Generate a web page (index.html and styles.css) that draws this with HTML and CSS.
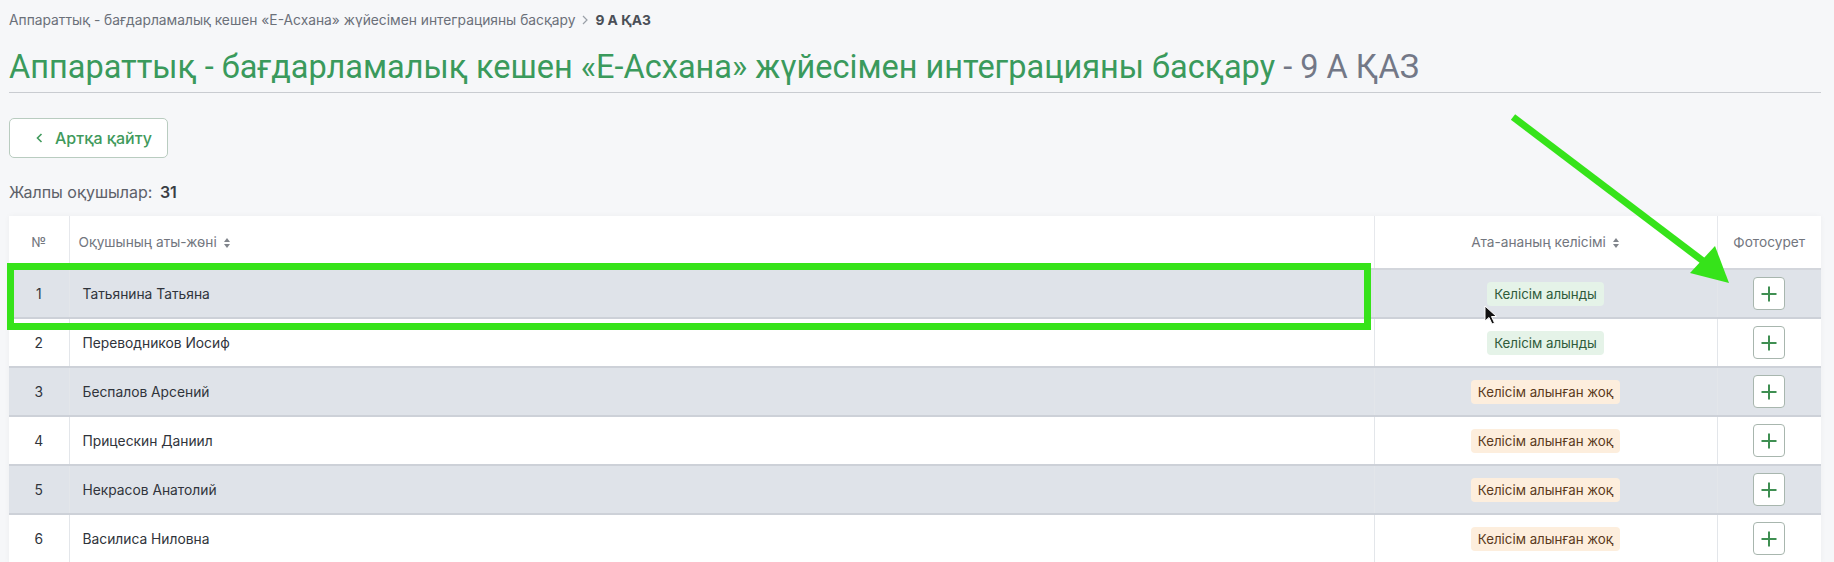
FILE: index.html
```html
<!DOCTYPE html>
<html lang="kk">

<head>
  <meta charset="UTF-8">
  <meta name="viewport" content="width=device-width, initial-scale=1.0">
  <title>9 А ҚАЗ - Е-Асхана</title>
  <link rel="stylesheet" href="styles.css">
</head>

<body>
  <div class="page">
    <!-- Breadcrumbs -->
    <nav class="crumbs">
      <a href="#">Аппараттық - бағдарламалық кешен «Е-Асхана» жүйесімен интеграцияны басқару</a>
      <svg class="crumbs-sep" width="8" height="10" viewBox="0 0 8 10"><path d="M2 1l4 4-4 4" fill="none" stroke="#9aa0a8" stroke-width="1.2"/></svg>
      <span class="crumbs-current">9 А ҚАЗ</span>
    </nav>

    <h1 class="title">
      <span class="title-main">Аппараттық - бағдарламалық кешен «Е-Асхана» жүйесімен интеграцияны басқару</span>
      <span class="title-class">- 9 А ҚАЗ</span>
    </h1>

    <button class="back-btn">
      <svg width="10" height="12" viewBox="0 0 10 12"><path d="M6.5 2L2.5 6l4 4" fill="none" stroke="#3f9a5c" stroke-width="1.6"/></svg>
      Артқа қайту
    </button>

    <div class="total">Жалпы оқушылар: <b>31</b></div>

    <!-- Students table -->
    <table class="students">
      <colgroup>
        <col class="col-num">
        <col>
        <col class="col-consent">
        <col class="col-photo">
      </colgroup>
      <thead>
        <tr>
          <th class="num">№</th>
          <th class="name">Оқушының аты-жөні <span class="sort"></span></th>
          <th class="center">Ата-ананың келісімі <span class="sort"></span></th>
          <th class="center">Фотосурет</th>
        </tr>
      </thead>
      <tbody>
        <tr class="grey">
          <td class="num">1</td>
          <td class="name">Татьянина Татьяна</td>
          <td class="center"><span class="badge ok">Келісім алынды</span></td>
          <td class="center"><button class="add-btn"></button></td>
        </tr>
        <tr>
          <td class="num">2</td>
          <td class="name">Переводников Иосиф</td>
          <td class="center"><span class="badge ok">Келісім алынды</span></td>
          <td class="center"><button class="add-btn"></button></td>
        </tr>
        <tr class="grey">
          <td class="num">3</td>
          <td class="name">Беспалов Арсений</td>
          <td class="center"><span class="badge no">Келісім алынған жоқ</span></td>
          <td class="center"><button class="add-btn"></button></td>
        </tr>
        <tr>
          <td class="num">4</td>
          <td class="name">Прицескин Даниил</td>
          <td class="center"><span class="badge no">Келісім алынған жоқ</span></td>
          <td class="center"><button class="add-btn"></button></td>
        </tr>
        <tr class="grey">
          <td class="num">5</td>
          <td class="name">Некрасов Анатолий</td>
          <td class="center"><span class="badge no">Келісім алынған жоқ</span></td>
          <td class="center"><button class="add-btn"></button></td>
        </tr>
        <tr>
          <td class="num">6</td>
          <td class="name">Василиса Ниловна</td>
          <td class="center"><span class="badge no">Келісім алынған жоқ</span></td>
          <td class="center"><button class="add-btn"></button></td>
        </tr>
      </tbody>
    </table>
  </div>

  <!-- Annotation marks drawn over the page -->
  <svg class="annotations" width="1834" height="562" viewBox="0 0 1834 562">
    <rect x="10.5" y="266.5" width="1357" height="60" fill="none" stroke="#36e31a" stroke-width="7"/>
    <line x1="1513" y1="117" x2="1703" y2="261" stroke="#36e31a" stroke-width="7"/>
    <polygon points="1729,283 1690,273 1715,246" fill="#36e31a"/>
    <path d="M1485 306 L1485 321 L1489 317.5 L1492 324 L1494.5 323 L1491.5 316.5 L1496.5 316.5 Z" fill="#111" stroke="#fff" stroke-width="1"/>
  </svg>
</body>

</html>
```

FILE: styles.css
```css
* {
  margin: 0;
  padding: 0;
  box-sizing: border-box;
}

body {
  background-color: #f6f7f9;
  font-family: Inter, "Noto Sans", sans-serif;
  color: #2b2f36;
  width: 1834px;
  height: 562px;
  overflow: hidden;
  position: relative;
}

.page {
  padding: 12px 13px 0 9px;
}

/* Breadcrumbs */
.crumbs {
  display: flex;
  align-items: center;
  gap: 6px;
  font-size: 13.8px;
  line-height: 16px;
  color: #6b7079;
}

.crumbs a {
  color: #6b7079;
  text-decoration: none;
}

.crumbs-current {
  font-weight: 700;
  color: #4a4f57;
}

/* Page title */
.title {
  margin-top: 20px;
  padding-bottom: 5px;
  border-bottom: 1.5px solid #c9ccd1;
  font-family: Roboto, "Liberation Sans", sans-serif;
  font-weight: 400;
  font-size: 32.5px;
  line-height: 39px;
  white-space: nowrap;
}

.title-main {
  color: #3a9a5c;
}

.title-class {
  color: #737887;
}

/* Back button */
.back-btn {
  margin-top: 25px;
  display: flex;
  align-items: center;
  gap: 10px;
  width: 159px;
  height: 40px;
  padding-left: 25px;
  background-color: #fff;
  border: 1px solid #b9ccc0;
  border-radius: 5px;
  font-family: Inter, sans-serif;
  font-size: 16px;
  font-weight: 500;
  color: #3f9a5c;
  cursor: pointer;
}

.total {
  margin-top: 24px;
  font-size: 16px;
  line-height: 20px;
  color: #5d6169;
}

.total b {
  font-weight: 600;
  color: #3a3e45;
  margin-left: 3px;
}

/* Table */
.students {
  margin-top: 14px;
  width: 1812px;
  table-layout: fixed;
  border-collapse: collapse;
  background-color: #fff;
  box-shadow: 0 0 6px rgba(0, 0, 0, 0.04);
  font-size: 13.8px;
}

.col-num {
  width: 60px;
}

.col-consent {
  width: 343px;
}

.col-photo {
  width: 104px;
}

.students th {
  height: 53px;
  font-weight: 400;
  font-size: 13.7px;
  color: #72767e;
  text-align: left;
  border-bottom: 2px solid #d3d6dc;
  border-right: 1.5px solid #e6e8ec;
}

.students td {
  height: 49px;
  border-bottom: 2px solid #cdd1d8;
  border-right: 1.5px solid #e3e6ea;
  color: #30343b;
}

.students th:last-child,
.students td:last-child {
  border-right: none;
}

.students tr.grey td {
  background-color: #dfe3e9;
}

.students .num {
  text-align: center;
}

.students th.name {
  padding-left: 9px;
}

.students td.name {
  padding-left: 13px;
}

.students .center {
  text-align: center;
}

/* Sort arrows */
.sort {
  display: inline-block;
  position: relative;
  width: 7px;
  height: 10px;
  margin-left: 3px;
  vertical-align: -1px;
}

.sort::before,
.sort::after {
  content: "";
  position: absolute;
  left: 0;
  border-left: 3.5px solid transparent;
  border-right: 3.5px solid transparent;
}

.sort::before {
  top: 0;
  border-bottom: 4px solid #80848b;
}

.sort::after {
  bottom: 0;
  border-top: 4px solid #80848b;
}

/* Consent badges */
.badge {
  display: inline-block;
  padding: 4px 7px;
  border-radius: 4px;
  font-size: 13.3px;
  line-height: 16px;
}

.badge.ok {
  background-color: #e5f3e8;
  color: #2f5b3b;
}

.badge.no {
  background-color: #fdeedd;
  color: #5b3a20;
}

/* Add photo button */
.add-btn {
  position: relative;
  width: 32px;
  height: 33px;
  background-color: #fff;
  border: 1px solid #a8b6ae;
  border-radius: 4px;
  cursor: pointer;
  vertical-align: middle;
}

.add-btn::before,
.add-btn::after {
  content: "";
  position: absolute;
  left: 50%;
  top: 50%;
  background-color: #3f8f52;
  transform: translate(-50%, -50%);
}

.add-btn::before {
  width: 15px;
  height: 2px;
}

.add-btn::after {
  width: 2px;
  height: 15px;
}

/* Overlay marks */
.annotations {
  position: absolute;
  top: 0;
  left: 0;
  pointer-events: none;
}
```
